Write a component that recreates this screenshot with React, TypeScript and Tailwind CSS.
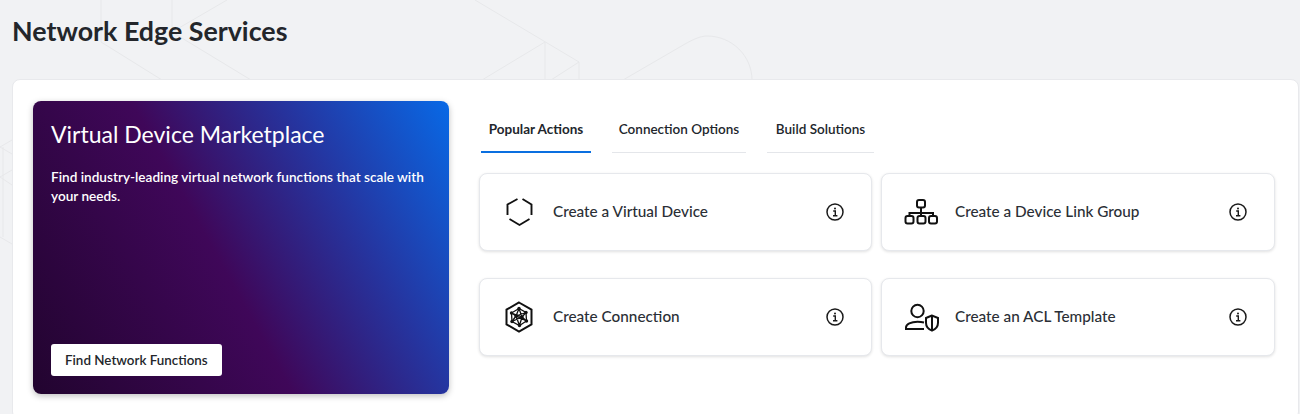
import type { ReactNode } from "react";

const font = "font-['Lato','Noto_Sans',sans-serif]";

function InfoIcon() {
  return (
    <svg className="h-[18px] w-[18px] shrink-0 text-[#1a1a1a]" viewBox="0 0 18 18" fill="none" stroke="currentColor">
      <circle cx="9" cy="9" r="8" strokeWidth="1.5" />
      <circle cx="9" cy="5.4" r="1" fill="currentColor" stroke="none" />
      <path d="M7.2 8h2.1v4.6M7 12.8h4.4" strokeWidth="1.4" />
    </svg>
  );
}

function HexOpenIcon() {
  return (
    <svg className="h-8 w-8" viewBox="0 0 32 32" fill="none" stroke="#111" strokeWidth="1.9">
      <path d="M14.5 3 4.5 8.500V19M19.500 3l9 5.500V19M6.500 23l10 6 10-6" />
    </svg>
  );
}

function HexMeshIcon() {
  return (
    <svg className="h-8 w-8" viewBox="0 0 32 32" fill="none" stroke="#111" strokeWidth="2">
      <path d="M16 1.500 28.500 8.700v14.600L16 30.500 3.500 23.300V8.700z" />
      <g strokeWidth="1.3">
        <path d="M16 7.500 23 11.500 23.500 20 16.500 24.500 9 20.500 8.500 12z" />
        <path d="M16 7.500 13 15 23 11.500M8.500 12l4.500 3 3.500 9.500M13 15l10.500 5M9 20.500 13 15M16 7.500l3 8.500-2.500 8.500M8.500 12 19 16l4-4.500M19 16l4.500 4M9 20.500 19 16" />
      </g>
      <g fill="#111" stroke="none">
        <circle cx="16" cy="7.500" r="1.700" />
        <circle cx="23" cy="11.500" r="1.700" />
        <circle cx="23.500" cy="20" r="1.700" />
        <circle cx="16.500" cy="24.500" r="1.700" />
        <circle cx="9" cy="20.500" r="1.700" />
        <circle cx="8.500" cy="12" r="1.700" />
        <circle cx="13" cy="15" r="1.700" />
        <circle cx="19" cy="16" r="1.700" />
      </g>
    </svg>
  );
}

function TreeIcon() {
  return (
    <svg className="h-8 w-[34px]" viewBox="0 0 34 32" fill="none" stroke="#111" strokeWidth="2">
      <rect x="13" y="4" width="8" height="7.500" rx="2" />
      <rect x="1.500" y="20" width="8" height="7.500" rx="2" />
      <rect x="13.500" y="20" width="8" height="7.500" rx="2" />
      <rect x="25" y="20" width="8" height="7.500" rx="2" />
      <path d="M17 11.500V20M5.500 20v-3h23.500v3" />
    </svg>
  );
}

function UserShieldIcon() {
  return (
    <svg className="h-8 w-9" viewBox="0 0 36 32" fill="none" stroke="#111" strokeWidth="2">
      <circle cx="14.500" cy="10" r="6.200" />
      <path d="M21 21.500c-2-.5-4-.7-6.500-.7-6.500 0-11.500 2.500-11.500 5.700V28h18" />
      <path d="M29 14.500 23 17v4.800c0 3.800 2.500 6.500 6 7.800 3.500-1.300 6-4 6-7.800V17z" />
      <path d="M29 15v14" />
    </svg>
  );
}

function Action({ icon, label }: { icon: ReactNode; label: string }) {
  return (
    <div className="flex h-[78px] items-center rounded-lg border border-[#e6e8ec] bg-white pr-[27px] shadow-[0_1px_3px_rgba(0,0,0,0.12)]">
      <div className="flex w-[73px] shrink-0 justify-center pl-[4px]">{icon}</div>
      <span className="flex-1 pb-[2px] text-[15.3px] font-medium text-[#2b2f36]">{label}</span>
      <InfoIcon />
    </div>
  );
}

function Tab({ label, active, width }: { label: string; active?: boolean; width: string }) {
  return (
    <div
      className={`flex h-[52px] items-center justify-center pt-[6px] text-[13.5px] text-[#22262c] ${width} ${
        active ? "border-b-2 border-[#0a6fe0] font-bold" : "border-b border-[#e4e6ea] font-semibold"
      }`}
    >
      {label}
    </div>
  );
}

export default function App() {
  return (
    <div className={`relative h-[414px] w-[1300px] overflow-hidden bg-[#f1f2f4] ${font}`}>
      {/* faint line art behind the page */}
      <svg className="absolute inset-0 h-full w-full" viewBox="0 0 1300 414" fill="none" stroke="#e7e8ea" strokeWidth="1">
        <path d="M101 0v42l61 38M172 0v32M227 0l-55 32 79 48" />
        <path d="M475 0l104 62v18M545 42v38M545 42l-63 38M579 62l-28 18" />
        <path d="M623 80l62-36c7-4 15-8 22-8 25 0 45 20 45 44" />
        <path d="M12 140l-12 7 12 7M12 170l-12 7 12 8M0 237l12 7M3 147v90" />
      </svg>

      <h1 className="relative pl-3 pt-[15px] text-[26.800px] font-bold leading-[32px] text-[#23262b]">Network Edge Services</h1>

      <div className="absolute left-3 top-[79px] flex h-[341px] w-[1287px] rounded-lg border border-[#e8e9ec] bg-white pl-5 pt-[21px]">
        <div className="flex h-[293px] w-[416px] shrink-0 flex-col items-start rounded-lg bg-[linear-gradient(61deg,#22042f_0%,#3f0759_45%,#2535a0_72%,#0869e6_100%)] px-[18px] pb-[18px] pt-[19px] text-white shadow-[0_2px_6px_rgba(0,0,0,0.25)]">
          <h2 className="text-[23px] font-normal leading-[28px]">Virtual Device Marketplace</h2>
          <p className="mt-5 text-[13.600px] font-semibold leading-[19px]">
            Find industry-leading virtual network functions that scale with your needs.
          </p>
          <button className="mt-auto h-8 rounded-[3px] bg-white px-[14px] text-[13.400px] font-semibold text-[#23262b]">
            Find Network Functions
          </button>
        </div>

        <div className="ml-[30px] w-[796px]">
          <div className="ml-[2px] flex gap-[21px]">
            <Tab label="Popular Actions" active width="w-[110px]" />
            <Tab label="Connection Options" width="w-[134px]" />
            <Tab label="Build Solutions" width="w-[107px]" />
          </div>
          <div className="mt-5 grid grid-cols-[393px_394px] gap-x-[9px] gap-y-[27px]">
            <Action icon={<HexOpenIcon />} label="Create a Virtual Device" />
            <Action icon={<TreeIcon />} label="Create a Device Link Group" />
            <Action icon={<HexMeshIcon />} label="Create Connection" />
            <Action icon={<UserShieldIcon />} label="Create an ACL Template" />
          </div>
        </div>
      </div>
    </div>
  );
}
